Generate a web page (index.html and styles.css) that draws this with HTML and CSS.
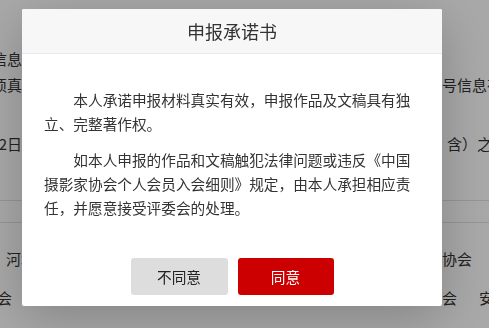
FILE: index.html
```html
<!DOCTYPE html>
<html lang="zh-CN">
<head>
<meta charset="utf-8">
<title>申报承诺书</title>
<link rel="stylesheet" href="styles.css">
</head>
<body>
<div class="page">
  <div class="row r1"><span class="l">填写信息</span><span class="m"></span><span class="r"></span></div>
  <div class="row r2"><span class="l">信息必须真</span><span class="m"></span><span class="r">号信息存在</span></div>
  <div class="row r3"><span class="l">5月12日</span><span class="m"></span><span class="r rs">含）之前</span></div>
  <div class="hr hr1"></div>
  <div class="hr hr2"></div>
  <div class="row r4"><span class="l ls">河北</span><span class="m"></span><span class="r">协会</span></div>
  <div class="row r5"><span class="l lx">协会</span><span class="m"></span><span class="r">会<span class="gap"></span>安徽</span></div>
</div>

<div class="overlay">
  <div class="dialog">
    <div class="dialog-head">申报承诺书</div>
    <div class="dialog-body">
      <p>本人承诺申报材料真实有效，申报作品及文稿具有独立、完整著作权。</p>
      <p>如本人申报的作品和文稿触犯法律问题或违反《中国摄影家协会个人会员入会细则》规定，由本人承担相应责任，并愿意接受评委会的处理。</p>
    </div>
    <div class="dialog-foot">
      <button class="btn btn-cancel">不同意</button>
      <button class="btn btn-ok">同意</button>
    </div>
  </div>
</div>
</body>
</html>
```

FILE: styles.css
```css
html, body {
  margin: 0;
  padding: 0;
  height: 100%;
  overflow: hidden;
  background: #ffffff;
  font-family: "Noto Sans CJK SC", "Noto Sans", sans-serif;
}

.page {
  padding-top: 45px;
  color: #333333;
  font-size: 15px;
}

.row {
  display: flex;
  height: 26px;
  align-items: center;
  white-space: nowrap;
}

.row .l {
  width: 22px;
  display: flex;
  justify-content: flex-end;
  overflow: hidden;
}

.row .l.ls {
  width: auto;
  padding-left: 6px;
}

.row .l.lx {
  width: 12px;
  margin-right: 10px;
}

.row .m {
  flex: 1;
}

.row .r {
  width: 47px;
  overflow: hidden;
}

.row .r.rs {
  padding-left: 5px;
  width: 42px;
}

.gap {
  display: inline-block;
  width: 22px;
}

.r3 { margin-top: 33px; }
.r4 { margin-top: 22px; }
.r5 { margin-top: 13px; }

.hr {
  border-top: 1px solid #e2e2e2;
}
.hr1 { margin-top: 44px; }
.hr2 { margin-top: 21px; }

.overlay {
  position: fixed;
  top: 0;
  left: 0;
  right: 0;
  bottom: 0;
  background: rgba(0, 0, 0, 0.34);
  padding: 9px 0 0 22px;
  box-sizing: border-box;
}

.dialog {
  width: 420px;
  background: #ffffff;
  border-radius: 2px;
  box-shadow: 0 12px 50px rgba(0, 0, 0, 0.22);
  overflow: hidden;
}

.dialog-head {
  height: 44px;
  line-height: 44px;
  background: #f7f7f7;
  border-bottom: 1px solid #e9e9e9;
  text-align: center;
  font-size: 18px;
  color: #333333;
}

.dialog-body {
  padding: 34px 22px 0 22px;
  color: #333333;
  font-size: 14.67px;
  line-height: 24px;
}

.dialog-body p {
  margin: 0 0 12px 0;
  text-indent: 2em;
}

.dialog-body p:last-child {
  margin-bottom: 0;
}

.dialog-foot {
  display: flex;
  justify-content: center;
  gap: 10px;
  padding: 38px 0 11px 0;
}

.btn {
  width: 97px;
  height: 37px;
  border: none;
  border-radius: 3px;
  font-family: "Noto Sans CJK SC", "Noto Sans", sans-serif;
  font-size: 14.67px;
  padding: 0;
  cursor: pointer;
}

.btn-cancel {
  background: #dddddd;
  color: #222222;
}

.btn-ok {
  background: #cc0000;
  color: #ffffff;
  width: 96px;
}
```
